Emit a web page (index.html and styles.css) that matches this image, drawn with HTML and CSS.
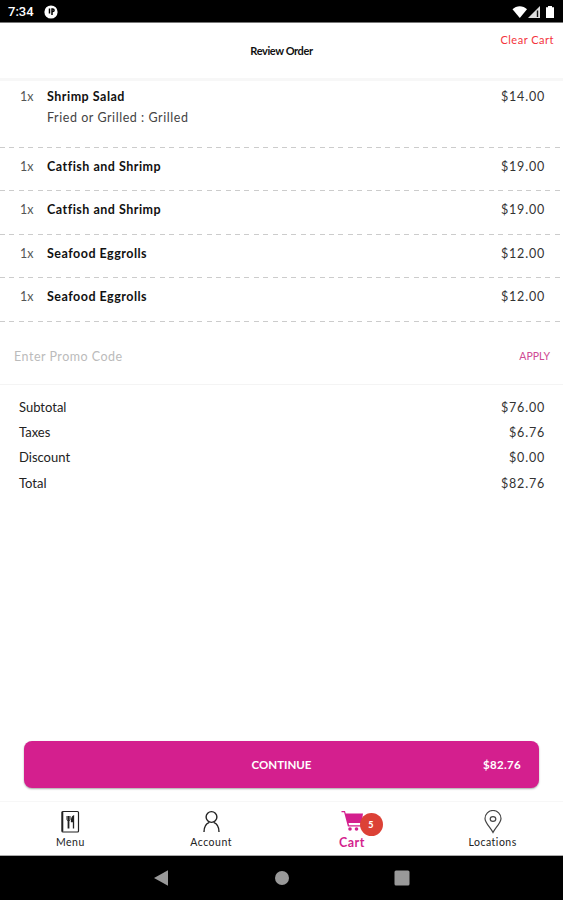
FILE: index.html
```html
<!DOCTYPE html>
<html lang="en">
<head>
  <meta charset="UTF-8">
  <meta name="viewport" content="width=device-width, initial-scale=1.0">
  <title>Review Order</title>
  <link rel="stylesheet" href="styles.css">
</head>
<body>
  <div class="status-bar">
    <span class="clock">7:34</span>
    <svg class="app-icon" width="14" height="14" viewBox="0 0 14 14">
      <circle cx="7" cy="7" r="6.6" fill="#fff"/>
      <path d="M5.5 3.5v5M8 10V4h.8a1.3 1.3 0 0 1 0 2.6H8" fill="none" stroke="#000" stroke-width="1.5"/>
    </svg>
    <svg class="signals" width="44" height="14" viewBox="0 0 44 14">
      <path d="M0.5 4.2C4.5 .2 11 .2 15 4.2L7.8 13z" fill="#fff"/>
      <path d="M28 1v12H16z" fill="#ddd"/>
      <path d="M25.5 5.5V12" stroke="#111" stroke-width="1.4"/>
      <path d="M34 2.2h2V1h4v1.2h2V13h-8z" fill="#fff"/>
    </svg>
  </div>

  <header>
    <h1>Review Order</h1>
    <a href="#" class="clear-cart">Clear Cart</a>
  </header>

  <ul class="cart-items">
    <li class="cart-item with-option">
      <span class="qty">1x</span>
      <div class="details">
        <p class="name">Shrimp Salad</p>
        <p class="option">Fried or Grilled : Grilled</p>
      </div>
      <span class="price">$14.00</span>
    </li>
    <li class="cart-item">
      <span class="qty">1x</span>
      <p class="name">Catfish and Shrimp</p>
      <span class="price">$19.00</span>
    </li>
    <li class="cart-item">
      <span class="qty">1x</span>
      <p class="name">Catfish and Shrimp</p>
      <span class="price">$19.00</span>
    </li>
    <li class="cart-item">
      <span class="qty">1x</span>
      <p class="name">Seafood Eggrolls</p>
      <span class="price">$12.00</span>
    </li>
    <li class="cart-item">
      <span class="qty">1x</span>
      <p class="name">Seafood Eggrolls</p>
      <span class="price">$12.00</span>
    </li>
  </ul>

  <div class="promo">
    <span class="promo-input">Enter Promo Code</span>
    <a href="#" class="apply">APPLY</a>
  </div>

  <div class="totals">
    <p class="row"><span>Subtotal</span><span class="price">$76.00</span></p>
    <p class="row"><span>Taxes</span><span class="price">$6.76</span></p>
    <p class="row"><span>Discount</span><span class="price">$0.00</span></p>
    <p class="row"><span>Total</span><span class="price">$82.76</span></p>
  </div>

  <a href="#" class="continue">
    <span class="label">CONTINUE</span>
    <span class="amount">$82.76</span>
  </a>

  <nav class="tabs">
    <a href="#" class="tab">
      <svg width="24" height="24" viewBox="0 0 24 24" fill="none" stroke="#222">
        <rect x="4" y="1.5" width="16.5" height="20.5" rx="1" stroke-width="1.2"/>
        <path d="M4.5 2v19.5" stroke-width="1.6"/>
        <path d="M10.5 6v12.5" stroke-width="1.8"/>
        <path d="M9 6v3.5q0 1.2 1.5 1.2t1.5-1.2V6" stroke-width="1"/>
        <path d="M15.5 18.5V6q-2 1-2 5.5h2" stroke-width="1.3" fill="#222"/>
      </svg>
      <span>Menu</span>
    </a>
    <a href="#" class="tab">
      <svg width="24" height="24" viewBox="0 0 24 24" fill="none" stroke="#222" stroke-width="1.4">
        <circle cx="12.5" cy="7" r="5.4"/>
        <path d="M5 22c0-5.5 2-8.5 5.3-9.7M14.7 12.3c3.3 1.2 5.3 4.2 5.3 9.7"/>
      </svg>
      <span>Account</span>
    </a>
    <a href="#" class="tab active">
      <svg width="24" height="24" viewBox="0 0 24 24" fill="#d41f8e">
        <path d="M1.5 1H5l.7 2.500H23L21.500 13H8.500l.6 2.300H22v1.300H7.900L4.100 2.300H1.500z"/>
        <circle cx="10" cy="19" r="1.8"/>
        <circle cx="16.5" cy="19" r="1.8"/>
      </svg>
      <span>Cart</span>
      <b class="badge">5</b>
    </a>
    <a href="#" class="tab">
      <svg width="24" height="24" viewBox="0 0 24 24" fill="none" stroke="#444" stroke-width="1.2">
        <path d="M12 22.5C9.5 17.5 4 13 4 8.5a8 8 0 0 1 16 0c0 4.5-5.5 9-8 14z"/>
        <ellipse cx="12" cy="9" rx="2.8" ry="2.3"/>
      </svg>
      <span>Locations</span>
    </a>
  </nav>

  <div class="system-nav">
    <svg width="16" height="18" viewBox="0 0 16 18"><path d="M0 9L14 1.2v15.6z" fill="#999"/></svg>
    <svg width="16" height="18" viewBox="0 0 16 18"><circle cx="8" cy="9" r="7" fill="#999"/></svg>
    <svg width="16" height="18" viewBox="0 0 16 18"><rect x=".5" y="1.5" width="15" height="15" rx="1.5" fill="#999"/></svg>
  </div>
</body>
</html>
```
FILE: styles.css
```css
* {
  box-sizing: border-box;
}

body {
  font-family: Lato, "Liberation Sans", sans-serif;
  font-size: 13px;
  margin: 0;
  height: 900px;
  display: flex;
  flex-direction: column;
  background-color: #fff;
  color: #222;
  overflow: hidden;
}

a {
  text-decoration: none;
  color: inherit;
}

p,
ul,
h1 {
  margin: 0;
  padding: 0;
}

.status-bar {
  height: 23px;
  flex-shrink: 0;
  background-color: #000;
  border-bottom: 1px solid #777;
  color: #fff;
  display: flex;
  align-items: center;
  padding: 1px 7px 0 8px;
}

.clock {
  font-family: Roboto, sans-serif;
  font-size: 13px;
  font-weight: 500;
  width: 36px;
}

.signals {
  margin-left: auto;
}

header {
  height: 58px;
  flex-shrink: 0;
  border-bottom: 3px solid #f7f7f7;
  position: relative;
  display: flex;
  align-items: center;
  justify-content: center;
}

h1 {
  font-size: 11px;
  font-weight: 700;
  letter-spacing: -0.4px;
  color: #111;
}

.clear-cart {
  position: absolute;
  top: 10px;
  right: 9px;
  font-size: 11px;
  line-height: 14px;
  letter-spacing: 0.5px;
  color: #f4333c;
}

.cart-items {
  list-style: none;
}

.cart-item {
  height: 43.6px;
  padding: 10px 18px 0 20px;
  display: flex;
  line-height: 18px;
  background: repeating-linear-gradient(90deg, #ccc 0 5px, transparent 5px 9.4px) 0 100% / 100% 1px no-repeat;
}

.with-option {
  height: 66.5px;
  padding-top: 7px;
}

.qty {
  width: 27px;
  font-size: 12.5px;
  color: #555;
}

.name {
  font-size: 12.5px;
  font-weight: 700;
  letter-spacing: 0.5px;
  color: #111;
}

.option {
  margin-top: 3px;
  font-size: 12.5px;
  letter-spacing: 0.55px;
  color: #444;
}

.price {
  margin-left: auto;
  font-size: 12.5px;
  letter-spacing: 0.8px;
  color: #333;
}

.promo {
  height: 63px;
  padding: 7px 13px 0 14px;
  border-bottom: 1px solid #f4f4f4;
  display: flex;
  align-items: center;
  justify-content: space-between;
}

.promo-input {
  font-size: 12.5px;
  letter-spacing: 0.5px;
  color: #bbb;
}

.apply {
  font-size: 10.5px;
  color: #cf4a93;
}

.totals {
  padding: 10px 18px 0 19px;
}

.row {
  display: flex;
  height: 25.3px;
  line-height: 25px;
}

.continue {
  height: 47px;
  margin: auto 24px 13px;
  border-radius: 8px;
  background-color: #d41f8e;
  box-shadow: 0 1px 2px rgba(0, 0, 0, 0.35);
  color: #fff;
  font-size: 11.5px;
  font-weight: 700;
  display: grid;
  grid-template-columns: 1fr auto 1fr;
  align-items: center;
  padding: 0 18px;
}

.label {
  grid-column: 2;
}

.amount {
  letter-spacing: 0.3px;
  text-align: right;
}

.tabs {
  height: 55px;
  flex-shrink: 0;
  border-top: 1px solid #f7f7f7;
  border-bottom: 1px solid #aaa;
  display: grid;
  grid-template-columns: repeat(4, 1fr);
}

.tab {
  position: relative;
  display: flex;
  flex-direction: column;
  align-items: center;
  padding-top: 8px;
  font-size: 10.5px;
  line-height: 17px;
  letter-spacing: 0.5px;
}

.active {
  font-size: 12.5px;
  font-weight: 700;
  color: #d41f8e;
}

.badge {
  position: absolute;
  top: 11px;
  left: 78px;
  width: 23px;
  height: 23px;
  border-radius: 50%;
  background-color: #dc4136;
  color: #fff;
  font-size: 9px;
  line-height: 23px;
  text-align: center;
}

.system-nav {
  height: 44px;
  flex-shrink: 0;
  background-color: #000;
  display: flex;
  align-items: center;
  justify-content: center;
  gap: 104px;
}
```
